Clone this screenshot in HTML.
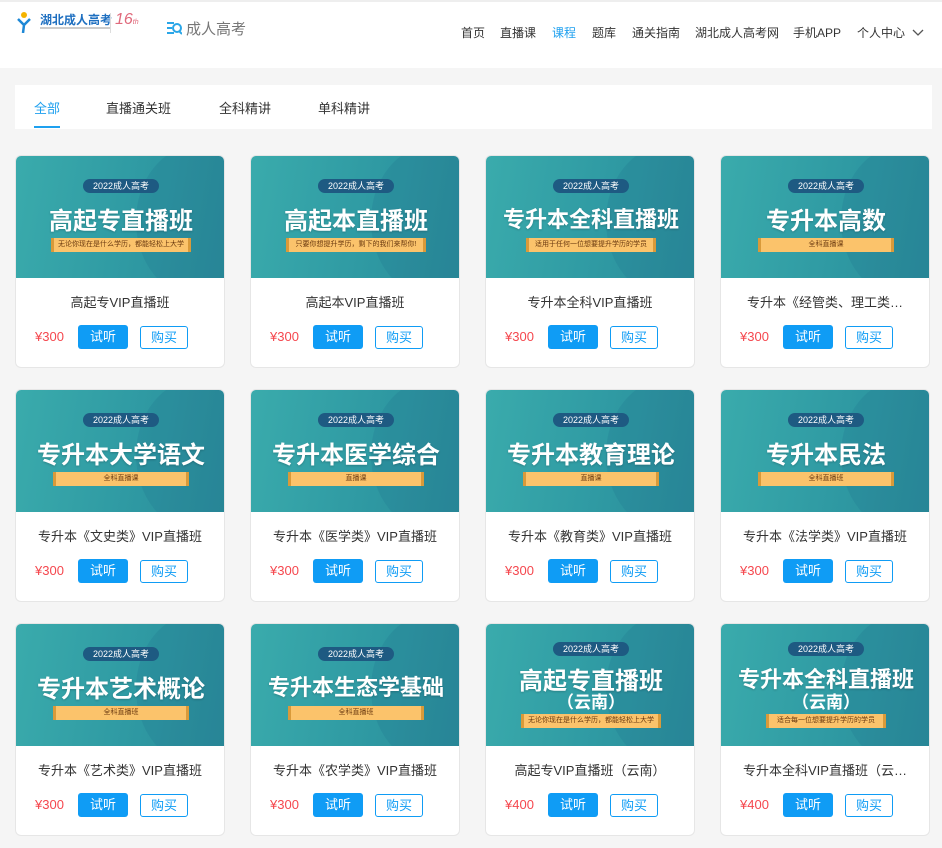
<!DOCTYPE html>
<html><head><meta charset="utf-8"><style>
*{margin:0;padding:0;box-sizing:border-box}
body{width:942px;height:848px;overflow:hidden;background:#f5f5f5;font-family:"Liberation Sans","Noto Sans CJK SC",sans-serif;position:relative;color:#333}
.hdr{position:absolute;left:0;top:0;width:942px;height:68px;background:#fff;border-top:2px solid #eee}
.nav{position:absolute;top:22px;font-size:12px;color:#333}
.tabs{position:absolute;left:15px;top:85px;width:917px;height:44px;background:#fff}
.tab{position:absolute;top:13px;font-size:13px;color:#333}
.card{position:absolute;width:210px;height:213px;background:#fff;border:1px solid #e6e6e6;border-radius:6px;overflow:hidden}
.img{position:absolute;left:0;top:0;width:210px;height:122px;background:linear-gradient(100deg,#3aabac 0%,#2f9aa3 55%,#2a8b99 100%);overflow:hidden}
.img .blob{position:absolute;right:-30px;top:-10px;width:120px;height:150px;border-radius:50%;background:rgba(30,110,140,.2)}
.pill{position:absolute;left:50%;transform:translateX(-50%);height:14px;line-height:14px;padding:0 10px;border-radius:7px;background:#1e5a82;color:#fff;font-size:9px;white-space:nowrap}
.big{position:absolute;left:0;width:100%;text-align:center;color:#fff;font-weight:bold;font-size:24px;white-space:nowrap;text-shadow:0 1px 2px rgba(0,0,0,.2)}
.big.s{font-size:22px}
.sub{position:absolute;left:0;width:100%;text-align:center;color:#fff;font-weight:bold;font-size:17px}
.strip{position:absolute;left:50%;transform:translateX(-50%);height:14px;line-height:14px;background:#fbc36b;color:#6b3a10;font-size:7px;text-align:center;border-left:3px solid #d99a3a;border-right:3px solid #d99a3a;white-space:nowrap}
.ttl{position:absolute;left:0;top:136px;width:100%;text-align:center;font-size:13px;color:#333;white-space:nowrap;overflow:hidden;text-overflow:ellipsis;padding:0 22px}
.price{position:absolute;left:19px;top:173px;font-size:13px;color:#f5474e}
.b1{position:absolute;left:62px;top:169px;width:50px;height:24px;background:#0f9cf5;color:#fff;border-radius:3px;font-size:13px;text-align:center;line-height:24px}
.b2{position:absolute;left:124px;top:170px;width:48px;height:23px;border:1px solid #0f9cf5;color:#0f9cf5;border-radius:3px;font-size:13px;text-align:center;line-height:21px}
</style></head><body>
<div class="hdr">
 <div style="position:absolute;left:17px;top:9px;width:14px;height:22px">
  <svg width="14" height="22"><circle cx="7" cy="4" r="3" fill="#f5b400"/><path d="M1 8 L7 14 L13 8 M7 14 L6 22" stroke="#1e88d6" stroke-width="2.5" fill="none"/></svg></div>
 <div style="position:absolute;left:40px;top:9px;font-size:12px;font-weight:bold;color:#1e6fc0">湖北成人高考</div>
 <div style="position:absolute;left:40px;top:25px;width:70px;height:2px;background:#ccc"></div>
 <div style="position:absolute;left:110px;top:11px;width:1px;height:20px;background:#ddd"></div>
 <div style="position:absolute;left:115px;top:9px;font-size:16px;font-style:italic;color:#e06a7c">16<span style="font-size:7px">th</span></div>
 <svg style="position:absolute;left:166px;top:19px" width="16" height="16"><path d="M1 2h7M1 7h5M1 12h7" stroke="#2aa6e8" stroke-width="2"/><circle cx="11" cy="7" r="4" stroke="#2aa6e8" stroke-width="2" fill="none"/><path d="M13 10l3 3" stroke="#2aa6e8" stroke-width="2"/></svg>
 <div style="position:absolute;left:186px;top:16px;font-size:15px;color:#777">成人高考</div>
 <div class="nav" style="left:461px">首页</div>
 <div class="nav" style="left:500px">直播课</div>
 <div class="nav" style="left:552px;color:#1ea0ef">课程</div>
 <div class="nav" style="left:592px">题库</div>
 <div class="nav" style="left:632px">通关指南</div>
 <div class="nav" style="left:695px">湖北成人高考网</div>
 <div class="nav" style="left:793px">手机APP</div>
 <div class="nav" style="left:857px">个人中心</div>
 <svg style="position:absolute;left:912px;top:27px" width="12" height="8"><path d="M1 1l5 5 5-5" stroke="#555" stroke-width="1.3" fill="none"/></svg>
</div>
<div class="tabs">
 <div class="tab" style="left:19px;color:#1ea0ef">全部</div>
 <div style="position:absolute;left:19px;top:41px;width:26px;height:2px;background:#1ea0ef"></div>
 <div class="tab" style="left:91px">直播通关班</div>
 <div class="tab" style="left:204px">全科精讲</div>
 <div class="tab" style="left:303px">单科精讲</div>
</div>

<div class="card" style="left:15px;top:155px"><div class="img"><div class="blob"></div><div class="pill" style="top:23px">2022成人高考</div><div class="big" style="top:45px">高起专直播班</div><div class="strip" style="top:82px;width:140px">无论你现在是什么学历，都能轻松上大学</div></div><div class="ttl">高起专VIP直播班</div><div class="price">¥300</div><div class="b1">试听</div><div class="b2">购买</div></div>
<div class="card" style="left:250px;top:155px"><div class="img"><div class="blob"></div><div class="pill" style="top:23px">2022成人高考</div><div class="big" style="top:45px">高起本直播班</div><div class="strip" style="top:82px;width:140px">只要你想提升学历，剩下的我们来帮你!</div></div><div class="ttl">高起本VIP直播班</div><div class="price">¥300</div><div class="b1">试听</div><div class="b2">购买</div></div>
<div class="card" style="left:485px;top:155px"><div class="img"><div class="blob"></div><div class="pill" style="top:23px">2022成人高考</div><div class="big s" style="top:46px">专升本全科直播班</div><div class="strip" style="top:82px;width:130px">适用于任何一位想要提升学历的学员</div></div><div class="ttl">专升本全科VIP直播班</div><div class="price">¥300</div><div class="b1">试听</div><div class="b2">购买</div></div>
<div class="card" style="left:720px;top:155px"><div class="img"><div class="blob"></div><div class="pill" style="top:23px">2022成人高考</div><div class="big" style="top:45px">专升本高数</div><div class="strip" style="top:82px;width:136px">全科直播课</div></div><div class="ttl">专升本《经管类、理工类…</div><div class="price">¥300</div><div class="b1">试听</div><div class="b2">购买</div></div>

<div class="card" style="left:15px;top:389px"><div class="img"><div class="blob"></div><div class="pill" style="top:23px">2022成人高考</div><div class="big" style="top:45px">专升本大学语文</div><div class="strip" style="top:82px;width:136px">全科直播课</div></div><div class="ttl">专升本《文史类》VIP直播班</div><div class="price">¥300</div><div class="b1">试听</div><div class="b2">购买</div></div>
<div class="card" style="left:250px;top:389px"><div class="img"><div class="blob"></div><div class="pill" style="top:23px">2022成人高考</div><div class="big" style="top:45px">专升本医学综合</div><div class="strip" style="top:82px;width:136px">直播课</div></div><div class="ttl">专升本《医学类》VIP直播班</div><div class="price">¥300</div><div class="b1">试听</div><div class="b2">购买</div></div>
<div class="card" style="left:485px;top:389px"><div class="img"><div class="blob"></div><div class="pill" style="top:23px">2022成人高考</div><div class="big" style="top:45px">专升本教育理论</div><div class="strip" style="top:82px;width:136px">直播课</div></div><div class="ttl">专升本《教育类》VIP直播班</div><div class="price">¥300</div><div class="b1">试听</div><div class="b2">购买</div></div>
<div class="card" style="left:720px;top:389px"><div class="img"><div class="blob"></div><div class="pill" style="top:23px">2022成人高考</div><div class="big" style="top:45px">专升本民法</div><div class="strip" style="top:82px;width:136px">全科直播班</div></div><div class="ttl">专升本《法学类》VIP直播班</div><div class="price">¥300</div><div class="b1">试听</div><div class="b2">购买</div></div>

<div class="card" style="left:15px;top:623px"><div class="img"><div class="blob"></div><div class="pill" style="top:23px">2022成人高考</div><div class="big" style="top:45px">专升本艺术概论</div><div class="strip" style="top:82px;width:136px">全科直播班</div></div><div class="ttl">专升本《艺术类》VIP直播班</div><div class="price">¥300</div><div class="b1">试听</div><div class="b2">购买</div></div>
<div class="card" style="left:250px;top:623px"><div class="img"><div class="blob"></div><div class="pill" style="top:23px">2022成人高考</div><div class="big s" style="top:46px">专升本生态学基础</div><div class="strip" style="top:82px;width:136px">全科直播班</div></div><div class="ttl">专升本《农学类》VIP直播班</div><div class="price">¥300</div><div class="b1">试听</div><div class="b2">购买</div></div>
<div class="card" style="left:485px;top:623px"><div class="img"><div class="blob"></div><div class="pill" style="top:18px">2022成人高考</div><div class="big" style="top:37px">高起专直播班</div><div class="sub" style="top:64px">（云南）</div><div class="strip" style="top:90px;width:140px">无论你现在是什么学历，都能轻松上大学</div></div><div class="ttl">高起专VIP直播班（云南）</div><div class="price">¥400</div><div class="b1">试听</div><div class="b2">购买</div></div>
<div class="card" style="left:720px;top:623px"><div class="img"><div class="blob"></div><div class="pill" style="top:18px">2022成人高考</div><div class="big s" style="top:38px">专升本全科直播班</div><div class="sub" style="top:64px">（云南）</div><div class="strip" style="top:90px;width:120px">适合每一位想要提升学历的学员</div></div><div class="ttl">专升本全科VIP直播班（云…</div><div class="price">¥400</div><div class="b1">试听</div><div class="b2">购买</div></div>
</body></html>
